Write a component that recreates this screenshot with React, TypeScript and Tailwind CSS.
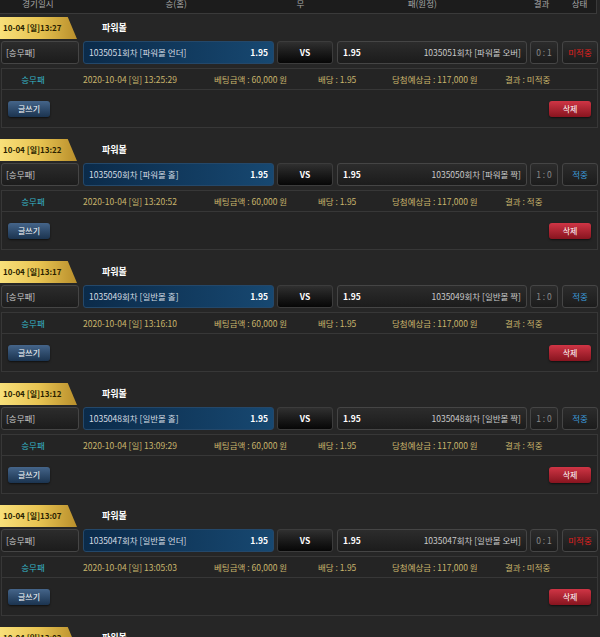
const font = { fontFamily: '"Noto Sans CJK KR", "Noto Sans", sans-serif' };

type Bet = {
  time: string;
  round: string;
  home: string;
  away: string;
  score: string;
  hit: boolean;
  placed: string;
};

const bets: Bet[] = [
  { time: "13:27", round: "1035051", home: "[파워볼 언더]", away: "[파워볼 오버]", score: "0 : 1", hit: false, placed: "13:25:29" },
  { time: "13:22", round: "1035050", home: "[파워볼 홀]", away: "[파워볼 짝]", score: "1 : 0", hit: true, placed: "13:20:52" },
  { time: "13:17", round: "1035049", home: "[일반볼 홀]", away: "[일반볼 짝]", score: "1 : 0", hit: true, placed: "13:16:10" },
  { time: "13:12", round: "1035048", home: "[일반볼 홀]", away: "[일반볼 짝]", score: "1 : 0", hit: true, placed: "13:09:29" },
  { time: "13:07", round: "1035047", home: "[일반볼 언더]", away: "[일반볼 오버]", score: "0 : 1", hit: false, placed: "13:05:03" },
  { time: "13:02", round: "1035046", home: "[파워볼 언더]", away: "[파워볼 오버]", score: "0 : 1", hit: false, placed: "13:00:41" },
];

const darkBox =
  "h-full rounded-[3px] border border-[#454545] bg-gradient-to-b from-[#2c2c2c] to-[#1c1c1c] flex items-center";

function BetBlock({ bet }: { bet: Bet }) {
  return (
    <div className="flex flex-col">
      <div className="flex h-[22px] items-center">
        <div className="flex h-full w-[77px] items-center bg-gradient-to-r from-[#f8e07a] via-[#e8c452] to-[#b98f2b] pl-[3px] text-[8px] font-bold text-[#2a1f00] [clip-path:polygon(0_0,88%_0,100%_100%,0_100%)]">
          10-04 [일]{bet.time}
        </div>
        <span className="ml-[25px] text-[9px] font-bold text-white">파워볼</span>
      </div>

      <div className="mt-[2px] flex h-[23px] px-[1px] text-[8.5px]">
        <div className={`${darkBox} w-[78px] pl-[4px] text-[#c9c9c9]`}>[승무패]</div>
        <div className="ml-[4px] flex h-full w-[191px] items-center justify-between rounded-[3px] border border-[#24486a] bg-gradient-to-r from-[#0b2b4a] to-[#174871] px-[5px] text-[#d4dbe2]">
          <span>
            {bet.round}회차 {bet.home}
          </span>
          <span className="font-bold text-white">1.95</span>
        </div>
        <div className="ml-[3px] flex h-full w-[56px] items-center justify-center rounded-[3px] border border-[#3c3c3c] bg-gradient-to-b from-[#303030] to-[#070707] font-bold text-white">
          VS
        </div>
        <div className={`${darkBox} ml-[4px] w-[190px] justify-between px-[5px] text-[#c9c9c9]`}>
          <span className="font-bold text-white">1.95</span>
          <span>
            {bet.round}회차 {bet.away}
          </span>
        </div>
        <div className={`${darkBox} ml-[3px] w-[28px] justify-center text-[#8a8a8a]`}>{bet.score}</div>
        <div
          className={`${darkBox} ml-[4px] w-[36px] justify-center ${
            bet.hit ? "text-[#3b9bdc]" : "text-[#e0201e]"
          }`}
        >
          {bet.hit ? "적중" : "미적중"}
        </div>
      </div>

      <div className="mx-[1px] mt-[4px] flex h-[60px] w-[597px] flex-col border border-[#373737] bg-[#242424] text-[8.5px]">
        <div className="flex h-[21px] shrink-0 items-center border-b border-[#373737] text-[#c8b46c]">
          <span className="w-[62px] text-center text-[#36b4c4]">승무패</span>
          <span className="ml-[19px] w-[131px]">2020-10-04 [일] {bet.placed}</span>
          <span className="w-[104px]">베팅금액 : 60,000 원</span>
          <span className="w-[74px]">배당 : 1.95</span>
          <span className="w-[113px]">당첨예상금 : 117,000 원</span>
          <span>결과 : {bet.hit ? "적중" : "미적중"}</span>
        </div>
        <div className="flex flex-1 items-center justify-between px-[6px]">
          <button className="h-[16px] w-[42px] rounded-[3px] bg-gradient-to-b from-[#45658a] to-[#1b3450] text-[8px] text-white shadow-[0_1px_2px_rgba(0,0,0,0.6)]">
            글쓰기
          </button>
          <button className="h-[16px] w-[42px] rounded-[3px] bg-gradient-to-b from-[#d03545] to-[#88141f] text-[8px] text-white shadow-[0_1px_2px_rgba(0,0,0,0.6)]">
            삭제
          </button>
        </div>
      </div>
    </div>
  );
}

export default function App() {
  return (
    <div className="h-[637px] w-[600px] overflow-hidden bg-[#262626]" style={font}>
      <div className="-mt-[7px] flex h-[21px] w-[597px] items-center border-r border-b border-[#3a3a3a] bg-[#1c1c1c] text-[8.5px] text-[#a8a8a8]">
        <span className="w-[76px] text-center">경기일시</span>
        <span className="w-[201px] text-center">승(홈)</span>
        <span className="w-[48px] text-center">무</span>
        <span className="w-[196px] text-center">패(원정)</span>
        <span className="w-[43px] text-center">결과</span>
        <span className="w-[33px] text-center">상태</span>
      </div>
      <div className="mt-[3px] flex flex-col gap-[11px]">
        {bets.map((bet) => (
          <BetBlock key={bet.round} bet={bet} />
        ))}
      </div>
    </div>
  );
}
